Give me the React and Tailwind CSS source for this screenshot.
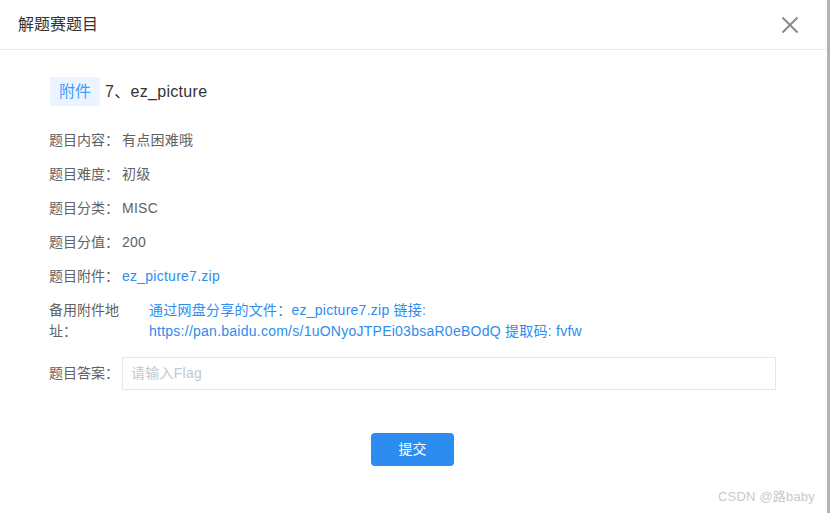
export default function App() {
  const font = { fontFamily: '"Liberation Sans", "Noto Sans CJK SC", sans-serif' };
  const rows = [
    ["题目内容：", "有点困难哦", false],
    ["题目难度：", "初级", false],
    ["题目分类：", "MISC", false],
    ["题目分值：", "200", false],
    ["题目附件：", "ez_picture7.zip", true],
  ];
  return (
    <div className="w-[830px] h-[513px] flex bg-white overflow-hidden" style={font}>
      <div className="w-[827px] h-full flex flex-col relative">
        <div className="h-[50px] shrink-0 border-b border-[#e8eaec] flex items-center justify-between pl-[18px] pr-[28px]">
          <span className="text-[16px] text-[#333] leading-none">解题赛题目</span>
          <svg width="18" height="18" viewBox="0 0 18 18" className="text-[#8a8a8a]">
            <path d="M1.5 1.5 L16.5 16.5 M16.5 1.5 L1.5 16.5" stroke="currentColor" strokeWidth="2" fill="none" />
          </svg>
        </div>
        <div className="flex flex-col pl-[49px] pr-[51px] pt-[27px]">
          <div className="flex items-center h-[29px]">
            <span className="h-[29px] ml-[1px] px-[9px] flex items-center bg-[#ecf5ff] text-[#409eff] text-[16px]">附件</span>
            <span className="ml-[5px] text-[16px] text-[#333] tracking-[0.3px]">7、ez_picture</span>
          </div>
          <div className="flex flex-col mt-[24px] gap-[13px] tracking-[0.25px]">
            {rows.map(([l, v, link]) => (
              <div key={l} className="flex items-center h-[21px] text-[14px]">
                <span className="w-[73px] text-[#606266] tracking-normal">{l}</span>
                <span className={link ? "text-[#2d8cf0]" : "text-[#606266]"}>{v}</span>
              </div>
            ))}
            <div className="flex text-[14px] leading-[21px]">
              <span className="w-[100px] pr-[28px] text-[#606266] tracking-normal">备用附件地址：</span>
              <span className="text-[#2d8cf0]">
                通过网盘分享的文件：ez_picture7.zip 链接:
                <br />
                https://pan.baidu.com/s/1uONyoJTPEi03bsaR0eBOdQ 提取码: fvfw
              </span>
            </div>
            <div className="flex items-center text-[14px] mt-[2px]">
              <span className="w-[73px] text-[#606266] tracking-normal">题目答案：</span>
              <div className="flex-1 h-[33px] border border-[#e4e6ea] flex items-center pl-[8px] text-[#c5c8ce]">
                请输入Flag
              </div>
            </div>
          </div>
          <div className="flex justify-center mt-[43px]">
            <div className="w-[83px] h-[33px] rounded-[4px] bg-[#2d8cf0] text-white text-[14px] flex items-center justify-center">
              提交
            </div>
          </div>
        </div>
        <div className="absolute right-[12px] bottom-[7px] text-[13px] text-[#cacaca] tracking-[0.2px]">CSDN @路baby</div>
      </div>
      <div className="w-[3px] h-full bg-[#b3b3b3]"></div>
    </div>
  );
}
